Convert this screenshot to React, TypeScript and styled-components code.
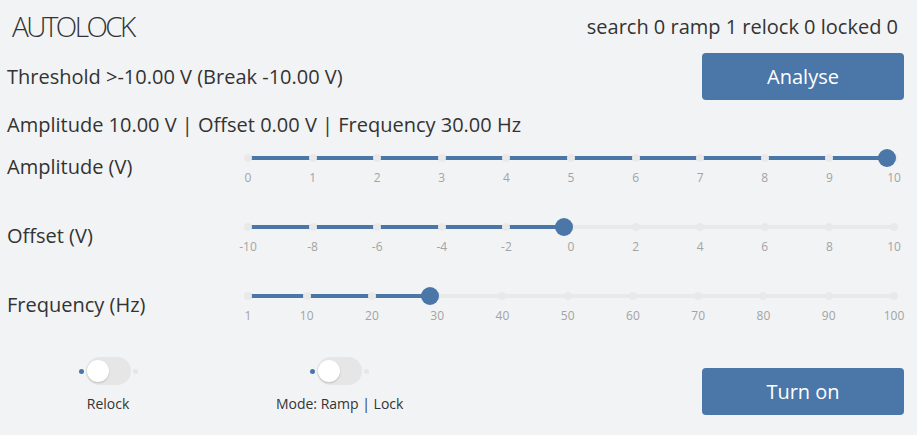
import React from "react";
import styled, { createGlobalStyle } from "styled-components";

const BLUE = "#4a76a8";
const FONT = `"Open Sans", "Liberation Sans", sans-serif`;

const Global = createGlobalStyle`
  html, body {
    margin: 0;
    padding: 0;
    background: #f2f3f5;
  }
  body {
    font-family: ${FONT};
    color: #333;
  }
`;

const Page = styled.div`
  width: 917px;
  height: 435px;
  box-sizing: border-box;
  padding: 0 13px 0 7px;
  display: flex;
  flex-direction: column;
  overflow: hidden;
`;

const Header = styled.div`
  display: flex;
  justify-content: space-between;
  align-items: flex-start;
  height: 42px;
`;

const Title = styled.h1`
  margin: 8px 0 0 5px;
  font-size: 28px;
  line-height: 36px;
  font-weight: 300;
  letter-spacing: -2.6px;
  color: #333;
`;

const Status = styled.div`
  margin-top: 13px;
  padding-right: 6px;
  font-size: 20px;
  line-height: 28px;
`;

const Grid = styled.div<{ $top: number }>`
  display: grid;
  grid-template-columns: repeat(4, 1fr);
  column-gap: 29.67px;
  margin-top: ${(p) => p.$top}px;
`;

const InfoText = styled.div<{ $span?: number }>`
  grid-column: span ${(p) => p.$span ?? 3};
  font-size: 20px;
  line-height: 28px;
  align-self: center;
  white-space: nowrap;
`;

const Summary = styled.div`
  margin-top: 11px;
  font-size: 20px;
  line-height: 28px;
`;

const Button = styled.button`
  height: 47px;
  border: none;
  border-radius: 4px;
  background: ${BLUE};
  color: #fff;
  font-family: ${FONT};
  font-size: 20px;
  padding: 0;
  cursor: pointer;
`;

const SliderRows = styled.div`
  display: flex;
  flex-direction: column;
  gap: 29px;
  margin-top: 8px;
`;

const SliderRow = styled.div`
  display: grid;
  grid-template-columns: 202px 1fr;
  column-gap: 29.67px;
  align-items: center;
  height: 40px;
`;

const RowLabel = styled.div`
  font-size: 20px;
  line-height: 28px;
`;

const SliderWrap = styled.div`
  padding: 0 10px 0 9.33px;
`;

const SliderBody = styled.div`
  position: relative;
  height: 40px;
`;

const Rail = styled.div`
  position: relative;
  top: 9px;
  height: 4px;
  border-radius: 2px;
  background: #e9e9e9;
`;

const Track = styled.div`
  position: absolute;
  left: 0;
  top: 9px;
  height: 4px;
  border-radius: 2px;
  background: ${BLUE};
`;

const Dot = styled.span`
  position: absolute;
  top: 7px;
  width: 8px;
  height: 8px;
  margin-left: -4px;
  border-radius: 50%;
  background: #e9e9e9;
`;

const Handle = styled.span`
  position: absolute;
  top: 2px;
  width: 18px;
  height: 18px;
  margin-left: -16px;
  border-radius: 50%;
  background: ${BLUE};
  z-index: 2;
`;

const MarkLabel = styled.span`
  position: absolute;
  top: 23px;
  transform: translateX(-50%);
  font-size: 12px;
  line-height: 16px;
  color: #a3a3a3;
  white-space: nowrap;
`;

type SliderProps = { min: number; max: number; value: number; marks: number[] };

function Slider({ min, max, value, marks }: SliderProps) {
  const pct = (v: number) => ((v - min) / (max - min)) * 100;
  return (
    <SliderWrap>
      <SliderBody>
        <Rail />
        <Track style={{ width: `calc(${pct(value)}% - 7px)` }} />
        {marks.map((m) => (
          <Dot key={`d${m}`} style={{ left: `${pct(m)}%` }} />
        ))}
        <Handle style={{ left: `${pct(value)}%` }} />
        {marks.map((m) => (
          <MarkLabel key={`l${m}`} style={{ left: `${pct(m)}%` }}>
            {m}
          </MarkLabel>
        ))}
      </SliderBody>
    </SliderWrap>
  );
}

const BottomGrid = styled.div`
  display: grid;
  grid-template-columns: repeat(4, 1fr);
  column-gap: 29.67px;
  margin-top: 32px;
  align-items: start;
`;

const ToggleGroup = styled.div`
  display: flex;
  flex-direction: column;
  align-items: center;
`;

const SwitchRow = styled.div`
  display: flex;
  align-items: center;
  height: 28px;
`;

const SideDot = styled.span<{ $on: boolean }>`
  width: 5px;
  height: 5px;
  border-radius: 50%;
  background: ${(p) => (p.$on ? BLUE : "#e6e6e6")};
  margin: 0 2px;
`;

const SwitchTrack = styled.div`
  width: 45px;
  height: 28px;
  box-sizing: border-box;
  padding: 3px 1px;
  border-radius: 14px;
  background: #e6e6e6;
  display: flex;
`;

const Knob = styled.span`
  width: 22px;
  height: 22px;
  border-radius: 50%;
  background: #fff;
  box-shadow: 0 1px 2px rgba(0, 0, 0, 0.18);
`;

const ToggleLabel = styled.div`
  margin-top: 9px;
  font-size: 14px;
  line-height: 20px;
`;

const BottomButton = styled(Button)`
  grid-column: 4;
  margin-top: 11px;
`;

function Toggle({ label }: { label: string }) {
  return (
    <ToggleGroup>
      <SwitchRow>
        <SideDot $on />
        <SwitchTrack>
          <Knob />
        </SwitchTrack>
        <SideDot $on={false} />
      </SwitchRow>
      <ToggleLabel>{label}</ToggleLabel>
    </ToggleGroup>
  );
}

const range = (a: number, b: number, s: number) => {
  const r: number[] = [];
  for (let v = a; v <= b; v += s) r.push(v);
  return r;
};

export default function App() {
  return (
    <>
      <Global />
      <Page>
        <Header>
          <Title>AUTOLOCK</Title>
          <Status>search 0 ramp 1 relock 0 locked 0</Status>
        </Header>
        <Grid $top={11}>
          <InfoText>Threshold &gt;-10.00 V (Break -10.00 V)</InfoText>
          <Button>Analyse</Button>
        </Grid>
        <Summary>Amplitude 10.00 V | Offset 0.00 V | Frequency 30.00 Hz</Summary>
        <SliderRows>
          <SliderRow>
            <RowLabel>Amplitude (V)</RowLabel>
            <Slider min={0} max={10} value={10} marks={range(0, 10, 1)} />
          </SliderRow>
          <SliderRow>
            <RowLabel>Offset (V)</RowLabel>
            <Slider min={-10} max={10} value={0} marks={range(-10, 10, 2)} />
          </SliderRow>
          <SliderRow>
            <RowLabel>Frequency (Hz)</RowLabel>
            <Slider min={1} max={100} value={30} marks={[1, ...range(10, 100, 10)]} />
          </SliderRow>
        </SliderRows>
        <BottomGrid>
          <Toggle label="Relock" />
          <Toggle label="Mode: Ramp | Lock" />
          <BottomButton>Turn on</BottomButton>
        </BottomGrid>
      </Page>
    </>
  );
}
